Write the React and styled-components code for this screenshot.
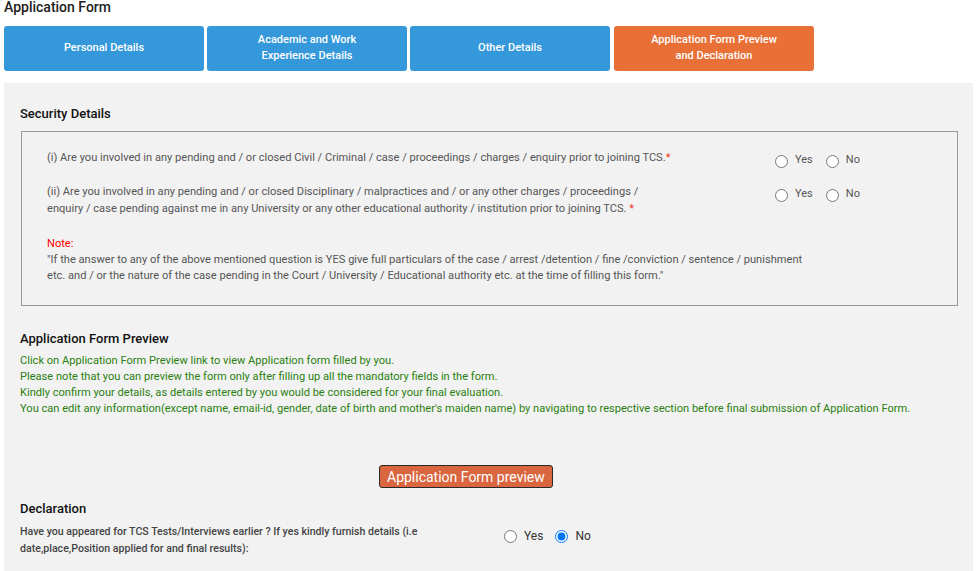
import React, { useState } from 'react';
import styled, { createGlobalStyle } from 'styled-components';

const GlobalStyle = createGlobalStyle`
  body {
    margin: 0;
    background: #fff;
    font-family: Roboto, "Liberation Sans", Arial, sans-serif;
  }
`

const tabs = [
  { id: 'personal', label: ['Personal Details'] },
  { id: 'academic', label: ['Academic and Work', 'Experience Details'] },
  { id: 'other', label: ['Other Details'] },
  { id: 'preview', label: ['Application Form Preview', 'and Declaration'] },
];

// lines are kept as on the original form
const securityQuestions = [
  {
    id: 'q1',
    lines: ['(i) Are you involved in any pending and / or closed Civil / Criminal / case / proceedings / charges / enquiry prior to joining TCS.'],
  },
  {
    id: 'q2',
    lines: [
      '(ii) Are you involved in any pending and / or closed Disciplinary / malpractices and / or any other charges / proceedings /',
      'enquiry / case pending against me in any University or any other educational authority / institution prior to joining TCS. ',
    ],
  },
];

function YesNo({ name, value, onChange, big }) {
  return (
    <RadioGroup $big={big}>
      {['Yes', 'No'].map((opt) => (
        <Option key={opt} $big={big}>
          <input
            type="radio"
            name={name}
            checked={value === opt}
            onChange={() => onChange(opt)}
          />
          <span>{opt}</span>
        </Option>
      ))}
    </RadioGroup>
  );
}

function App() {
  const [activeTab] = useState('preview');
  const [answers, setAnswers] = useState({ q1: '', q2: '', earlier: 'No' });

  const setAnswer = (key) => (val) => setAnswers({ ...answers, [key]: val });

  return (
    <Page>
      <GlobalStyle />
      <Title>Application Form</Title>
      <TabBar>
        {tabs.map((t) => (
          <Tab key={t.id} $active={activeTab === t.id}>
            {t.label.map((line) => (
              <span key={line}>{line}</span>
            ))}
          </Tab>
        ))}
      </TabBar>

      <Panel>
        <SectionTitle>Security Details</SectionTitle>
        <SecurityBox>
          {securityQuestions.map((q) => (
            <QuestionRow key={q.id}>
              <QuestionText>
                {q.lines.map((line, i) => (
                  <span key={i}>
                    {line}
                    {i === q.lines.length - 1 ? <Req>*</Req> : <br />}
                  </span>
                ))}
              </QuestionText>
              <YesNo name={q.id} value={answers[q.id]} onChange={setAnswer(q.id)} />
            </QuestionRow>
          ))}
          <Note>
            <NoteLabel>Note:</NoteLabel>
            "If the answer to any of the above mentioned question is YES give full particulars of the case / arrest /detention / fine /conviction / sentence / punishment etc. and / or the nature of the case pending in the Court / University / Educational authority etc. at the time of filling this form."
          </Note>
        </SecurityBox>

        <PreviewTitle>Application Form Preview</PreviewTitle>
        <Instructions>
          <p>Click on Application Form Preview link to view Application form filled by you.</p>
          <p>Please note that you can preview the form only after filling up all the mandatory fields in the form.</p>
          <p>Kindly confirm your details, as details entered by you would be considered for your final evaluation.</p>
          <p>You can edit any information(except name, email-id, gender, date of birth and mother's maiden name) by navigating to respective section before final submission of Application Form.</p>
        </Instructions>

        <ButtonRow>
          <PreviewButton>Application Form preview</PreviewButton>
        </ButtonRow>

        <DeclarationTitle>Declaration</DeclarationTitle>
        <DeclarationRow>
          <DeclarationText>
            Have you appeared for TCS Tests/Interviews earlier ? If yes kindly furnish details (i.e date,place,Position applied for and final results):
          </DeclarationText>
          <YesNo name="earlier" value={answers.earlier} onChange={setAnswer('earlier')} big />
        </DeclarationRow>
      </Panel>
    </Page>
  );
}

const Page = styled.div`
  padding: 0 3px 0 4px;
`
const Title = styled.h1`
  margin: -1px 0 0;
  font-size: 14px;
  line-height: 16px;
  font-weight: 500;
  color: #222;
`
const TabBar = styled.div`
  display: flex;
  gap: 3px;
  margin-top: 11px;
`
const Tab = styled.div`
  width: 200px;
  height: 45px;
  padding-bottom: 1px;
  box-sizing: border-box;
  border-radius: 3px;
  background: ${(p) => (p.$active ? '#E87036' : '#3598DA')};
  color: #fff;
  font-size: 11px;
  font-weight: 500;
  line-height: 16px;
  display: flex;
  flex-direction: column;
  align-items: center;
  justify-content: center;
  text-align: center;
  cursor: pointer;
  &:last-child { margin-left: 1px; }
`
const Panel = styled.div`
  margin-top: 12px;
  background: #F2F2F2;
  padding: 23px 15px 20px 16px;
  min-height: 470px;
`
const SectionTitle = styled.h2`
  margin: 0;
  font-size: 13px;
  line-height: 16px;
  font-weight: 500;
  color: #111;
`
const SecurityBox = styled.div`
  margin: 9px 0 0 1px;
  border: 1px solid #999;
  padding: 17px 20px 21px 25px;
  display: flex;
  flex-direction: column;
  gap: 17px;
`
const QuestionRow = styled.div`
  display: grid;
  grid-template-columns: 728px auto;
  align-items: start;
`
const QuestionText = styled.div`
  font-size: 11.1px;
  line-height: 17px;
  color: #555;
  white-space: nowrap;
`
const Req = styled.span`
  color: #e32;
`
const RadioGroup = styled.div`
  display: flex;
  gap: ${(p) => (p.$big ? '12px' : '13px')};
  padding-top: ${(p) => (p.$big ? '6px' : '4px')};
  height: ${(p) => (p.$big ? 'auto' : '17px')};
  box-sizing: border-box;
`
const Option = styled.label`
  display: flex;
  align-items: ${(p) => (p.$big ? 'center' : 'flex-start')};
  gap: 7px;
  font-size: ${(p) => (p.$big ? '12px' : '11px')};
  color: ${(p) => (p.$big ? '#333' : '#555')};
  line-height: 14px;
  input {
    margin: ${(p) => (p.$big ? '0' : '2px 0 0')};
    width: 13px;
    height: 13px;
  }
`
const Note = styled.div`
  margin-top: 2px;
  max-width: 760px;
  font-size: 11.1px;
  line-height: 16px;
  color: #555;
`
const NoteLabel = styled.div`
  color: #f00;
`
const PreviewTitle = styled(SectionTitle)`
  margin-top: 25px;
`
const Instructions = styled.div`
  margin-top: 6px;
  font-size: 11.1px;
  line-height: 16px;
  color: #2A7F10;
  p { margin: 0; }
`
const ButtonRow = styled.div`
  margin-top: 48px;
  padding-left: 359px;
`
const PreviewButton = styled.button`
  height: 23px;
  padding: 0 7px;
  border: 1px solid #2a2a2a;
  border-radius: 3px;
  background: #D9663F;
  color: #fff;
  font-family: inherit;
  font-size: 14px;
  cursor: pointer;
`
const DeclarationTitle = styled(SectionTitle)`
  margin-top: 13px;
`
const DeclarationRow = styled.div`
  margin-top: 6px;
  display: grid;
  grid-template-columns: 484px auto;
  align-items: start;
`
const DeclarationText = styled.div`
  max-width: 420px;
  font-size: 10.6px;
  font-weight: 500;
  line-height: 17px;
  color: #444;
`

export default App;
